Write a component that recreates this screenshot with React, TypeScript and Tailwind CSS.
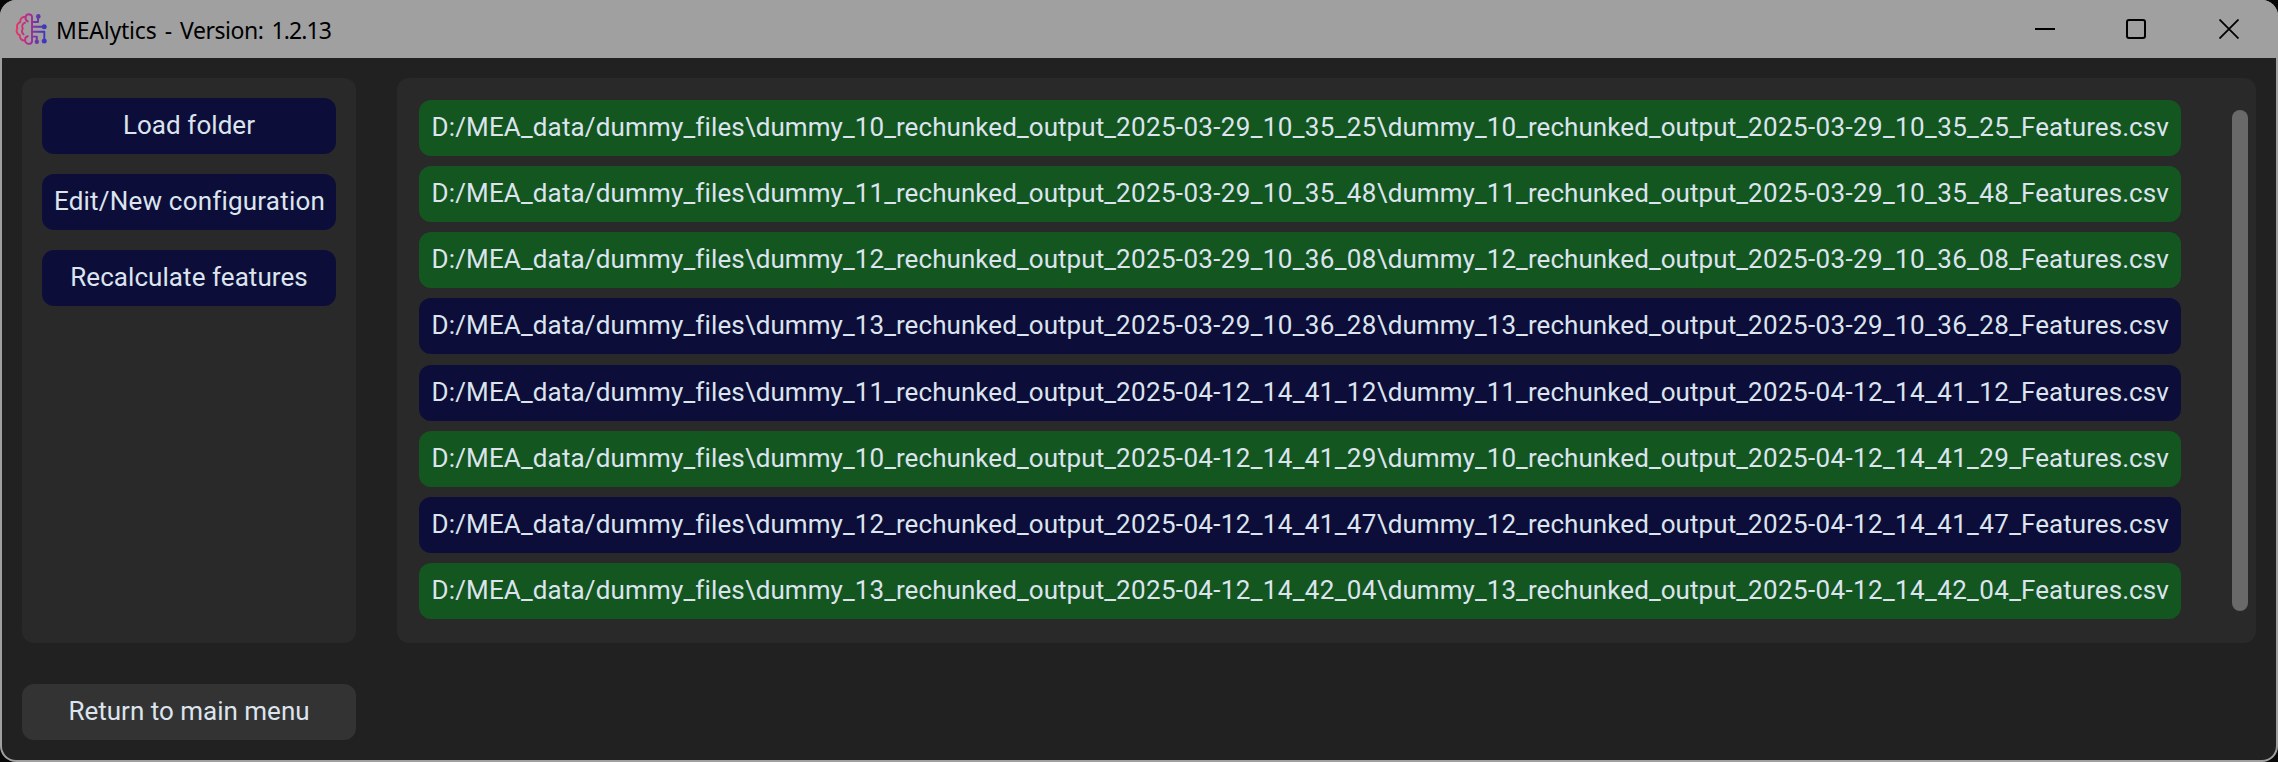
const files = [
  { number: 10, stamp: "2025-03-29_10_35_25", done: true },
  { number: 11, stamp: "2025-03-29_10_35_48", done: true },
  { number: 12, stamp: "2025-03-29_10_36_08", done: true },
  { number: 13, stamp: "2025-03-29_10_36_28", done: false },
  { number: 11, stamp: "2025-04-12_14_41_12", done: false },
  { number: 10, stamp: "2025-04-12_14_41_29", done: true },
  { number: 12, stamp: "2025-04-12_14_41_47", done: false },
  { number: 13, stamp: "2025-04-12_14_42_04", done: true },
];

function Logo() {
  return (
    <svg width="32" height="32" viewBox="0 0 32 32" fill="none" strokeLinecap="round" strokeLinejoin="round">
      <defs>
        <linearGradient id="logo" x1="0" y1="0" x2="32" y2="0" gradientUnits="userSpaceOnUse">
          <stop offset="0" stopColor="#f03560" />
          <stop offset="0.45" stopColor="#ac2c94" />
          <stop offset="0.65" stopColor="#7434a8" />
          <stop offset="1" stopColor="#2f38c4" />
        </linearGradient>
      </defs>
      <g stroke="url(#logo)" strokeWidth="1.9">
        <path d="M17 3.5C16 .6 11.5 .4 10.6 3.8C7 3.6 4.8 6 5.4 9C2.6 10 1.2 12.6 2.4 15.5C.6 17.6 2 21.4 4.8 22.2C4.6 25.4 6.8 28 10 27.6C11 31.8 16 31.8 17 28.6Z" />
        <path d="M10.6 4C10.2 6.2 11 7.8 12.8 8.4M10.2 9.6C7.4 10.4 6.6 12.8 7.6 15.2M7.8 15.4C6.6 17.6 7 20 8.6 21.4M10.2 27.4C9.8 25 11 23.6 12.8 23.2" />
        <path d="M17 9H23V4M17 13.7H28M17 18.7H29.3V26M17 23.6H21.8V27" />
      </g>
      <g fill="url(#logo)">
        <circle cx="23.3" cy="3.4" r="2.3" />
        <circle cx="29.2" cy="13.7" r="2.5" />
        <circle cx="29.2" cy="28" r="2.5" />
        <circle cx="21.8" cy="28.8" r="2.2" />
      </g>
    </svg>
  );
}

function TitleBar() {
  return (
    <header className="flex h-[58px] shrink-0 items-center bg-[#a0a0a0] pl-[15px] pr-[39px] text-black">
      <Logo />
      <h1 className="ml-[9px] mt-[2px] whitespace-pre font-['Noto_Sans',sans-serif] text-[23px] leading-8 [word-spacing:2.4px]">
        <span className="tracking-[-0.2px]">MEAlytics - </span>
        <span className="tracking-[-0.45px]">Version: </span>
        <span className="tracking-[-0.9px]">1.2.13</span>
      </h1>
      <div className="ml-auto flex items-center gap-[71px]">
        <svg width="20" height="20" viewBox="0 0 20 20" fill="none" stroke="currentColor" strokeWidth="2">
          <path d="M0 10H20" />
        </svg>
        <svg width="20" height="20" viewBox="0 0 20 20" fill="none" stroke="currentColor" strokeWidth="2">
          <rect x="1" y="1" width="18" height="18" rx="2" />
        </svg>
        <svg className="ml-[2px]" width="20" height="20" viewBox="0 0 20 20" fill="none" stroke="currentColor" strokeWidth="1.8">
          <path d="M.5 .5L19.5 19.5M19.5 .5L.5 19.5" />
        </svg>
      </div>
    </header>
  );
}

function SideButton({ label, className = "" }: { label: string; className?: string }) {
  return (
    <button className={`flex h-14 w-full items-center justify-center whitespace-nowrap rounded-xl bg-[#0c0e39] pb-[2px] leading-8 ${className}`}>
      {label}
    </button>
  );
}

function FilePath({ number, stamp }: { number: number; stamp: string }) {
  const name = `dummy_${number}_rechunked_output_`;
  return (
    <span className="whitespace-pre tracking-[0.07px]">
      <span className="tracking-[0.15px]">{"D:/MEA_data/dummy_files\\"}</span>
      {name}
      <span className="tracking-[0.34px]">{`${stamp}\\`}</span>
      {name}
      <span className="tracking-[0.37px]">{stamp}</span>
      _Features.csv
    </span>
  );
}

export default function App() {
  return (
    <div className="h-[762px] w-[2278px] bg-[#080808]">
      <div className="flex h-full flex-col overflow-hidden rounded-[16px] bg-[#a0a0a0]">
        <TitleBar />
        <main className="mx-[2px] mb-[2px] flex grow flex-col rounded-b-[14px] bg-[#212121] px-5 py-5 font-[Roboto,sans-serif] text-[26px] text-[#dce4ee]">
          <div className="flex h-[565px] gap-[41px]">
            <nav className="flex w-[334px] flex-col gap-5 rounded-xl bg-[#292929] p-5">
              <SideButton label="Load folder" className="tracking-[0.06px]" />
              <SideButton label="Edit/New configuration" className="pl-[1px] tracking-[0.2px]" />
              <SideButton label="Recalculate features" className="tracking-[0.06px]" />
            </nav>
            <section className="flex w-[1859px] justify-between rounded-xl bg-[#292929] pl-[22px] pr-2 pt-[22px]">
              <ul className="flex h-[519px] w-[1762px] flex-col justify-between">
                {files.map((file) => (
                  <li
                    key={file.stamp}
                    className={`flex h-14 items-center rounded-xl pb-[2px] pl-[12.5px] leading-8 ${file.done ? "bg-[#145620]" : "bg-[#0c0e39]"}`}
                  >
                    <FilePath number={file.number} stamp={file.stamp} />
                  </li>
                ))}
              </ul>
              <div className="mt-[10px] h-[501px] w-4 rounded-full bg-[#696969]" />
            </section>
          </div>
          <button className="mt-[41px] flex h-14 w-[334px] items-center justify-center rounded-xl bg-[#333333] pb-[2px] leading-8">
            Return to main menu
          </button>
        </main>
      </div>
    </div>
  );
}
